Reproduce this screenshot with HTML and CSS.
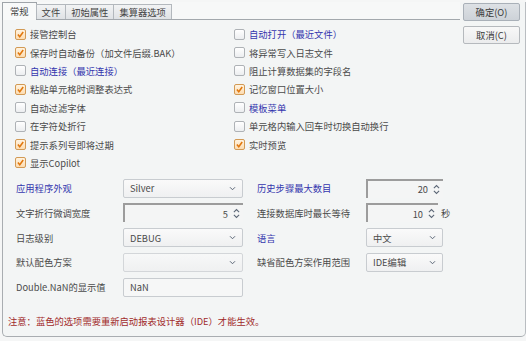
FILE: index.html
```html
<!DOCTYPE html>
<html lang="zh">
<head>
  <meta charset="UTF-8" />
  <title>选项</title>
  <link rel="stylesheet" href="styles.css">
</head>
<body>
<div class="dialog">
  <div class="main">
    <div class="tabs">
      <span class="tab active">常规</span>
      <span class="tab">文件</span>
      <span class="tab">初始属性</span>
      <span class="tab">集算器选项</span>
    </div>

    <div class="page">
      <div class="checks">
        <div class="col left">
          <div class="check"><span class="box on"><svg viewBox="0 0 11 11"><path d="M2.3 5.6 L4.6 8.3 L8.8 2.4"/></svg></span>接管控制台</div>
          <div class="check"><span class="box on"><svg viewBox="0 0 11 11"><path d="M2.3 5.6 L4.6 8.3 L8.8 2.4"/></svg></span>保存时自动备份（加文件后缀.BAK）</div>
          <div class="check blue"><span class="box"></span>自动连接（最近连接）</div>
          <div class="check"><span class="box on"><svg viewBox="0 0 11 11"><path d="M2.3 5.6 L4.6 8.3 L8.8 2.4"/></svg></span>粘贴单元格时调整表达式</div>
          <div class="check"><span class="box"></span>自动过滤字体</div>
          <div class="check"><span class="box"></span>在字符处折行</div>
          <div class="check"><span class="box on"><svg viewBox="0 0 11 11"><path d="M2.3 5.6 L4.6 8.3 L8.8 2.4"/></svg></span>提示系列号即将过期</div>
          <div class="check"><span class="box on"><svg viewBox="0 0 11 11"><path d="M2.3 5.6 L4.6 8.3 L8.8 2.4"/></svg></span>显示Copilot</div>
        </div>
        <div class="col">
          <div class="check blue"><span class="box"></span>自动打开（最近文件）</div>
          <div class="check"><span class="box"></span>将异常写入日志文件</div>
          <div class="check"><span class="box"></span>阻止计算数据集的字段名</div>
          <div class="check"><span class="box on"><svg viewBox="0 0 11 11"><path d="M2.3 5.6 L4.6 8.3 L8.8 2.4"/></svg></span>记忆窗口位置大小</div>
          <div class="check blue"><span class="box"></span>模板菜单</div>
          <div class="check"><span class="box"></span>单元格内输入回车时切换自动换行</div>
          <div class="check"><span class="box on"><svg viewBox="0 0 11 11"><path d="M2.3 5.6 L4.6 8.3 L8.8 2.4"/></svg></span>实时预览</div>
        </div>
      </div>

      <div class="form">
        <span class="label blue">应用程序外观</span>
        <div class="select">Silver<svg class="down" viewBox="0 0 8 6"><path d="M1 1.5 L4 4.5 L7 1.5"/></svg></div>
        <span class="label second blue">历史步骤最大数目</span>
        <div class="cell"><div class="spin">20<svg class="updown" viewBox="0 0 8 12"><path d="M1 4.5 L4 1.5 L7 4.5 M1 7.5 L4 10.5 L7 7.5"/></svg></div></div>

        <span class="label">文字折行微调宽度</span>
        <div class="spin">5<svg class="updown" viewBox="0 0 8 12"><path d="M1 4.5 L4 1.5 L7 4.5 M1 7.5 L4 10.5 L7 7.5"/></svg></div>
        <span class="label second">连接数据库时最长等待</span>
        <div class="cell"><div class="spin short">10<svg class="updown" viewBox="0 0 8 12"><path d="M1 4.5 L4 1.5 L7 4.5 M1 7.5 L4 10.5 L7 7.5"/></svg></div><span class="unit">秒</span></div>

        <span class="label">日志级别</span>
        <div class="select">DEBUG<svg class="down" viewBox="0 0 8 6"><path d="M1 1.5 L4 4.5 L7 1.5"/></svg></div>
        <span class="label second blue">语言</span>
        <div class="cell"><div class="select">中文<svg class="down" viewBox="0 0 8 6"><path d="M1 1.5 L4 4.5 L7 1.5"/></svg></div></div>

        <span class="label">默认配色方案</span>
        <div class="select disabled"><svg class="down" viewBox="0 0 8 6"><path d="M1 1.5 L4 4.5 L7 1.5"/></svg></div>
        <span class="label second">缺省配色方案作用范围</span>
        <div class="cell"><div class="select">IDE编辑<svg class="down" viewBox="0 0 8 6"><path d="M1 1.5 L4 4.5 L7 1.5"/></svg></div></div>

        <span class="label">Double.NaN的显示值</span>
        <div class="text">NaN</div>
      </div>

      <p class="note">注意：蓝色的选项需要重新启动报表设计器（IDE）才能生效。</p>
    </div>
  </div>

  <div class="side">
    <button class="btn default">确定(O)</button>
    <button class="btn">取消(C)</button>
  </div>
</div>
</body>
</html>
```

FILE: styles.css
```css
body {
  margin: 0;
  background: #f5f6f6;
  font-family: "Noto Sans CJK SC", sans-serif;
  font-size: 9.3px;
  color: #4a4a4a;
}

.dialog {
  display: flex;
  box-sizing: border-box;
  width: 524px;
  height: 335px;
  margin: 2px 0 0 2px;
  border-left: 1px solid #a9adb1;
  border-right: 1px solid #b9bdc1;
  border-bottom: 1px solid #a9adb1;
  border-radius: 0 0 5px 5px;
  background: #f3f5f5;
}

.main {
  width: 457px;
}

/* tab strip */
.tabs {
  display: flex;
  align-items: flex-end;
  height: 17px;
  border-bottom: 1px solid #a3a8ad;
  background: #f7f8f8;
}

.tab {
  height: 14px;
  line-height: 14px;
  padding: 0 5px;
  margin-left: -1px;
  border: 1px solid #b3b8bd;
  border-bottom: none;
  background: linear-gradient(#f2f3f4, #dfe2e5);
  color: #444;
}

.tab.active {
  height: 17px;
  line-height: 16px;
  padding: 0 7px;
  margin: 0 0 -1px -1px;
  background: #f8f9f9;
  border-color: #9fa4a9;
}

.page {
  padding: 5px 0 0 12px;
}

/* checkbox columns */
.checks {
  display: flex;
}

.col.left {
  width: 219px;
}

.check {
  display: flex;
  align-items: center;
  gap: 4px;
  height: 18.4px;
  white-space: nowrap;
}

.box {
  box-sizing: border-box;
  width: 11px;
  height: 11px;
  border: 1px solid #aeb2b6;
  border-radius: 2px;
  background: linear-gradient(#ffffff, #eceef0);
}

.box.on {
  border-color: #d29a55;
  background: linear-gradient(#fff3e0, #fcdcb2);
}

.box svg {
  display: block;
  width: 9px;
  height: 9px;
}

.box svg path {
  fill: none;
  stroke: #e1780f;
  stroke-width: 1.9;
}

.blue {
  color: #3436ae;
}

/* field grid */
.form {
  display: grid;
  grid-template-columns: 107px 120px 123px 100px;
  grid-auto-rows: 19px;
  row-gap: 5.75px;
  margin: 6.5px 0 0 1px;
  align-items: center;
}

.label {
  white-space: nowrap;
}

.label.second {
  padding-left: 14px;
}

.cell {
  display: flex;
  align-items: center;
  height: 19px;
}

.cell .select,
.cell .spin {
  width: 77px;
}

.cell .spin.short {
  width: 72px;
}

.unit {
  margin-left: 3px;
}

.select,
.text {
  box-sizing: border-box;
  display: flex;
  align-items: center;
  height: 19px;
  padding: 0 6px;
  border: 1px solid #c8ccd0;
  border-radius: 2px;
  background: linear-gradient(#fafafa, #eff0f1);
  color: #4a4a4a;
}

.select.disabled {
  border-color: #d3d6d9;
  background: linear-gradient(#f7f8f8, #eff0f1);
}

.text {
  background: #f6f7f7;
}

.select .down {
  width: 7px;
  height: 5px;
  margin-left: auto;
}

.down path,
.updown path {
  fill: none;
  stroke: #5b6676;
  stroke-width: 1.2;
}

.spin {
  box-sizing: border-box;
  display: flex;
  align-items: center;
  justify-content: flex-end;
  height: 19px;
  padding-right: 3px;
  border-top: 2px solid #9c9c9c;
  border-left: 2px solid #9c9c9c;
  background: #f4f5f5;
  color: #4a4a4a;
}

.updown {
  width: 7px;
  height: 11px;
  margin-left: 5px;
}

.note {
  margin: 17px 0 0 -7px;
  color: #a12a2a;
}

/* buttons */
.side {
  display: flex;
  flex-direction: column;
  gap: 5px;
  padding: 1px 0 0 3px;
}

.btn {
  width: 57px;
  height: 18px;
  padding: 0;
  font-family: inherit;
  font-size: 9.3px;
  color: #3a3a3a;
  border: 1px solid #b5b9bd;
  border-radius: 2px;
  background: linear-gradient(#f8f8f8, #ebeced);
}

.btn.default {
  border-color: #a9b0b8;
  background: linear-gradient(#dde1e5, #cdd2d8);
}
```
